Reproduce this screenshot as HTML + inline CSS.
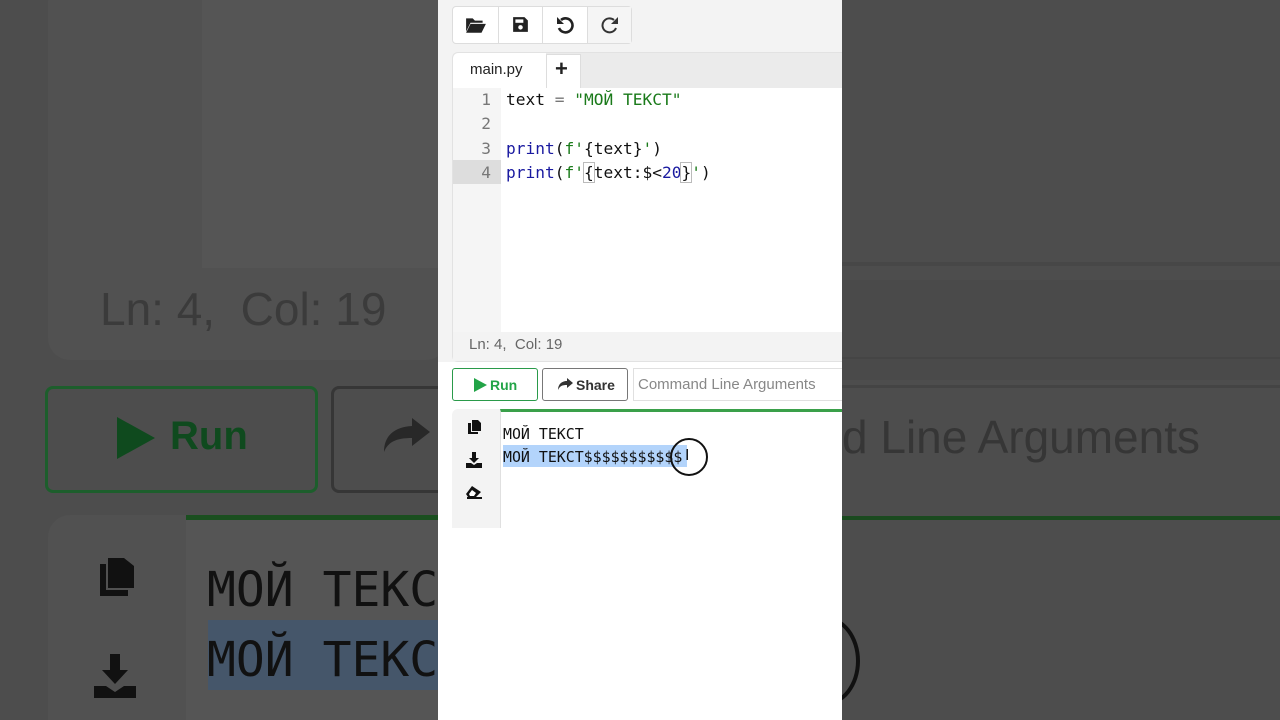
<!DOCTYPE html>
<html><head><meta charset="utf-8"><style>
*{box-sizing:border-box;margin:0;padding:0}
html,body{width:1280px;height:720px;overflow:hidden}
body{background:#4d4d4d;position:relative;font-family:"Liberation Sans",sans-serif}
.a{position:absolute}
.mono{font-family:"DejaVu Sans Mono","Liberation Mono",monospace}
</style></head><body>
<div class="a" style="left:48px;top:-20px;width:400px;height:380px;background:#515151;border-radius:22px"></div>
<div class="a" style="left:202px;top:0;width:240px;height:268px;background:#555"></div>
<div class="a" style="left:100px;top:282px;font-size:46px;color:#3b3b3b">Ln: 4,&nbsp; Col: 19</div>
<div class="a" style="left:45px;top:386px;width:273px;height:107px;border:3px solid #1d5e2c;border-radius:8px"></div>
<svg class="a" style="left:115px;top:415px" width="42" height="46" viewBox="0 0 42 46"><path d="M2 2L40 23L2 44Z" fill="#0f4a1e"/></svg>
<div class="a" style="left:170px;top:414px;font-size:40px;font-weight:bold;color:#0f4a1e">Run</div>
<div class="a" style="left:331px;top:386px;width:130px;height:107px;border:3px solid #363636;border-radius:8px"></div>
<svg class="a" style="left:382px;top:418px" width="48" height="36" viewBox="0 0 48 36"><path d="M30 0L48 14L30 28V20C14 20 6 24 2 34C2 18 12 9 30 8Z" fill="#282828"/></svg>
<div class="a" style="left:48px;top:515px;width:400px;height:205px;background:#515151;border-radius:22px 22px 0 0"></div>
<div class="a" style="left:186px;top:515px;width:260px;height:205px;background:#555;border-top:5px solid #1a4f1f"></div>
<div class="a mono" style="left:207px;top:562px;font-size:48px;color:#111">МОЙ ТЕКС</div>
<div class="a" style="left:208px;top:620px;width:232px;height:70px;background:#45566a"></div>
<div class="a mono" style="left:207px;top:632px;font-size:48px;color:#111">МОЙ ТЕКС</div>
<svg class="a" style="left:98px;top:552px" width="40" height="44" viewBox="0 0 40 44"><path d="M10 6H26L36 14V36H10Z M2 12H8V38H30V44H2Z" fill="#111"/></svg>
<svg class="a" style="left:92px;top:652px" width="46" height="46" viewBox="0 0 46 46"><path d="M18 2H28V18H36L23 32L10 18H18Z M2 34H14L23 40L32 34H44V46H2Z" fill="#111"/></svg>
<div class="a" style="left:842px;top:262px;width:440px;height:4px;background:#474747"></div>
<div class="a" style="left:842px;top:280px;width:440px;height:100px;background:#4a4a4a"></div>
<div class="a" style="left:842px;top:385px;width:440px;height:3px;background:#444"></div>
<div class="a" style="left:842px;top:410px;font-size:46px;color:#363636;white-space:nowrap">d Line Arguments</div>
<div class="a" style="left:842px;top:357px;width:440px;height:2px;background:#454545"></div>
<div class="a" style="left:842px;top:516px;width:440px;height:4px;background:#1a4a1f"></div>
<div class="a" style="left:790px;top:616px;width:70px;height:90px;border:4px solid #111;border-radius:50%;clip-path:inset(0 0 0 50px)"></div>

<div class="a" style="left:438px;top:0;width:404px;height:720px;background:#fff"></div>
<div class="a" style="left:438px;top:0;width:404px;height:362px;background:#f3f3f3"></div>
<div class="a" style="left:452px;top:6px;width:180px;height:38px;background:#fff;border:1px solid #ddd;border-radius:4px"></div>
<div class="a" style="left:587px;top:7px;width:44px;height:36px;background:#f5f5f5;border-left:1px solid #ddd"></div>
<div class="a" style="left:498px;top:7px;width:1px;height:36px;background:#ddd"></div>
<div class="a" style="left:542px;top:7px;width:1px;height:36px;background:#ddd"></div>
<svg class="a" style="left:465px;top:16px" width="22" height="18" viewBox="0 0 20 16"><path d="M1 2H7L9 4H16V6H5L1 14Z M5 7H19L15 15H1Z" fill="#222"/></svg>
<svg class="a" style="left:512px;top:16px" width="17" height="17" viewBox="0 0 15 15"><path d="M1 1H11L14 4V14H1Z" fill="#222"/><rect x="3" y="3" width="7" height="3" fill="#fff"/><circle cx="7.5" cy="10" r="2" fill="#fff"/></svg>
<svg class="a" style="left:556px;top:16px" width="18" height="18" viewBox="0 0 18 18"><path d="M5 4A7 7 0 1 1 3 12" fill="none" stroke="#222" stroke-width="2.6"/><path d="M1 1V8H8Z" fill="#222"/></svg>
<svg class="a" style="left:601px;top:16px" width="18" height="18" viewBox="0 0 18 18"><path d="M13 4A7 7 0 1 0 15 12" fill="none" stroke="#333" stroke-width="2"/><path d="M17 1V8H10Z" fill="#333"/></svg>

<div class="a" style="left:452px;top:52px;width:390px;height:310px;background:#fff;border:1px solid #e2e2e2;border-radius:6px 0 0 6px;border-right:none"></div>
<div class="a" style="left:453px;top:53px;width:389px;height:35px;background:#ebebeb;border-radius:6px 0 0 0"></div>
<div class="a" style="left:453px;top:53px;width:93px;height:35px;background:#fff;border-radius:6px 0 0 0"></div>
<div class="a" style="left:470px;top:61px;font-size:15px;color:#222">main.py</div>
<div class="a" style="left:546px;top:54px;width:35px;height:34px;background:#fff;border:1px solid #ddd;border-bottom:none"></div>
<div class="a" style="left:555px;top:56px;font-size:22px;font-weight:bold;color:#222">+</div>
<div class="a" style="left:453px;top:88px;width:48px;height:244px;background:#f5f5f5"></div>
<div class="a" style="left:453px;top:160px;width:48px;height:24px;background:#ddd"></div>
<div class="a" style="left:453px;top:332px;width:389px;height:29px;background:#f3f3f3"></div>
<div class="a" style="left:469px;top:336px;font-size:15px;color:#666">Ln: 4,&nbsp; Col: 19</div>
<div class="a mono" style="left:453px;top:88px;width:38px;text-align:right;font-size:16.2px;line-height:24.4px;color:#777">1<br>2<br>3<br>4</div>
<div class="a mono" style="left:506px;top:88px;font-size:16.2px;line-height:24.4px;color:#111;white-space:pre">text <span style="color:#777">=</span> <span style="color:#1a7a1a">"МОЙ ТЕКСТ"</span>

<span style="color:#1a1aa0">print</span>(<span style="color:#1a7a1a">f'</span>{text}<span style="color:#1a7a1a">'</span>)
<span style="color:#1a1aa0">print</span>(<span style="color:#1a7a1a">f'</span><span style="outline:1px solid #bbb">{</span>text:$&lt;<span style="color:#1a1aa0">20</span><span style="outline:1px solid #bbb">}</span><span style="color:#1a7a1a">'</span>)</div>

<div class="a" style="left:452px;top:368px;width:86px;height:33px;border:1px solid #2a9a4a;border-radius:3px;background:#fff"></div>
<svg class="a" style="left:474px;top:378px" width="13" height="14" viewBox="0 0 13 14"><path d="M0 0L13 7L0 14Z" fill="#22a447"/></svg>
<div class="a" style="left:490px;top:377px;font-size:14px;font-weight:bold;color:#22a447">Run</div>
<div class="a" style="left:542px;top:368px;width:86px;height:33px;border:1px solid #777;border-radius:3px;background:#fff"></div>
<svg class="a" style="left:558px;top:378px" width="15" height="12" viewBox="0 0 15 12"><path d="M9 0L15 5L9 10V7C4 7 2 8 0 12C0 6 4 3 9 3Z" fill="#333"/></svg>
<div class="a" style="left:576px;top:377px;font-size:14px;font-weight:bold;color:#333">Share</div>
<div class="a" style="left:633px;top:368px;width:209px;height:33px;border:1px solid #e0e0e0;border-right:none;background:#fff"></div>
<div class="a" style="left:638px;top:376px;font-size:15px;color:#888;white-space:nowrap">Command Line Arguments</div>

<div class="a" style="left:452px;top:409px;width:390px;height:119px;background:#f3f3f3;border-radius:6px 0 0 0"></div>
<div class="a" style="left:500px;top:409px;width:342px;height:119px;background:#fff;border-top:3px solid #3aa04a;border-left:1px solid #e0e0e0"></div>
<svg class="a" style="left:468px;top:420px" width="13" height="14" viewBox="0 0 13 14"><path d="M4 0H10L13 3V11H4Z M0 3H3V12H10V14H0Z" fill="#111"/></svg>
<svg class="a" style="left:466px;top:452px" width="16" height="16" viewBox="0 0 16 16"><path d="M6 0H10V6H13L8 11L3 6H6Z M0 11H5L8 13L11 11H16V16H0Z" fill="#111"/></svg>
<svg class="a" style="left:466px;top:486px" width="16" height="13" viewBox="0 0 16 13"><path d="M6 0L15 6L10 11H2L0 8Z" fill="#111"/><path d="M3 8L6 4L10 7L8 10H4Z" fill="#fff"/><rect x="1" y="11" width="15" height="2" fill="#111"/></svg>
<div class="a" style="left:503px;top:445px;width:184px;height:22px;background:#b3d4fb"></div>
<div class="a mono" style="left:503px;top:423px;font-size:14.9px;line-height:23px;color:#111;white-space:pre">МОЙ ТЕКСТ
МОЙ ТЕКСТ$$$$$$$$$$$</div>
<div class="a" style="left:670px;top:438px;width:38px;height:38px;border:2px solid #111;border-radius:50%"></div>
<div class="a" style="left:685px;top:447px;font-size:16px;color:#111">I</div>
</body></html>
